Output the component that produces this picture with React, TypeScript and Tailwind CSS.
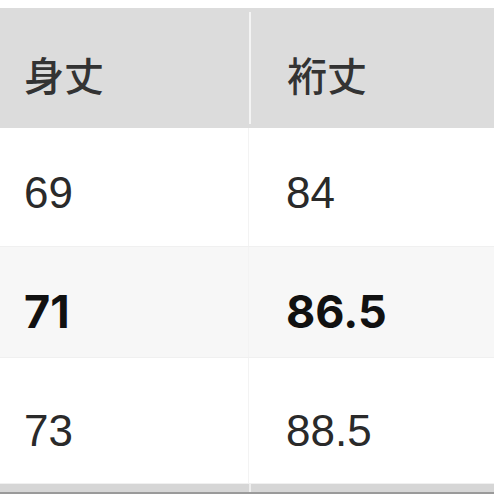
import React from 'react';

const rows = [
  { a: '69', b: '84', bold: false, bg: 'bg-white', h: 'h-[119px]', pt: 'pt-[12px]' },
  { a: '71', b: '86.5', bold: true, bg: 'bg-[#f7f7f7]', h: 'h-[111px]', pt: 'pt-[20px]' },
  { a: '73', b: '88.5', bold: false, bg: 'bg-white', h: 'h-[126px]', pt: 'pt-[20px]' },
];

const App: React.FC = () => {
  return (
    <div
      className="w-[494px] h-[494px] overflow-hidden bg-white pt-[8px] text-[#2a2a2a]"
      style={{ fontFamily: '"Liberation Sans", "Noto Sans CJK JP", sans-serif' }}
    >
      {/* header */}
      <div
        className="flex h-[120px] bg-[#dcdcdc] text-[40px] font-medium text-[#333]"
        style={{ fontFamily: '"Noto Sans CJK JP", sans-serif' }}
      >
        <div className="flex w-[249px] items-center pl-[24px] pt-[12px]">身丈</div>
        <div className="w-[2px] my-[4px] bg-[#f4f4f4]" />
        <div className="flex flex-1 items-center pl-[36px] pt-[12px]">裄丈</div>
      </div>

      {rows.map((r) => (
        <div
          key={r.a}
          className={`flex ${r.h} ${r.bg} border-b border-[#f0f0f0] ${
            r.bold ? 'font-bold text-[45px] text-[#111] font-["Inter",sans-serif]' : 'text-[44px]'
          }`}
        >
          <div className={`flex w-[249px] items-center pl-[24px] ${r.pt} border-r border-[#f3f3f3]`}>
            {r.a}
          </div>
          <div className={`flex flex-1 items-center pl-[37px] ${r.pt}`}>{r.b}</div>
        </div>
      ))}

      <div className="flex h-[10px] bg-[#d6d6d6] border-b-2 border-[#9a9a9a]">
        <div className="w-[249px]" />
        <div className="w-[2px] bg-[#eeeeee]" />
      </div>
    </div>
  );
};

export default App;
